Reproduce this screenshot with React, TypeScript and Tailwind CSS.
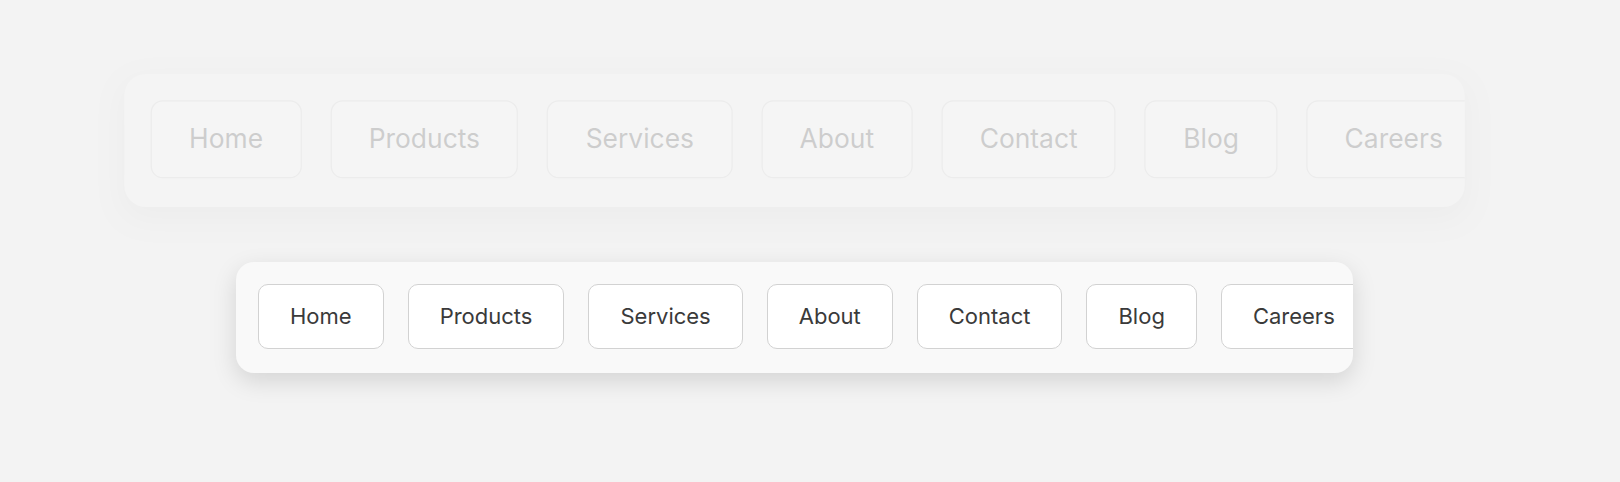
const links = ["Home", "Products", "Services", "About", "Contact", "Blog", "Careers"];

function NavBar({ className = "" }: { className?: string }) {
  return (
    <nav
      className={
        "ml-[236px] w-[1117px] h-[111px] rounded-[18px] bg-[#f9f9f9] overflow-hidden shadow-[0_8px_24px_rgba(0,0,0,0.13)] " +
        className
      }
    >
      <div className="flex items-center gap-[24px] p-[22px]">
        {links.map((label) => (
          <button
            key={label}
            className="shrink-0 h-[65px] px-[31px] rounded-[10px] border-[1.5px] border-[#d2d2d2] bg-white text-[22px] text-[#3a3a3a]"
          >
            {label}
          </button>
        ))}
      </div>
    </nav>
  );
}

export default function App() {
  return (
    <div
      className="min-h-screen bg-[#f3f3f3] pt-[85px]"
      style={{ fontFamily: "Inter, 'Noto Sans', sans-serif" }}
    >
      <NavBar className="scale-[1.2] opacity-20" />
      <NavBar className="mt-[66px]" />
    </div>
  );
}
